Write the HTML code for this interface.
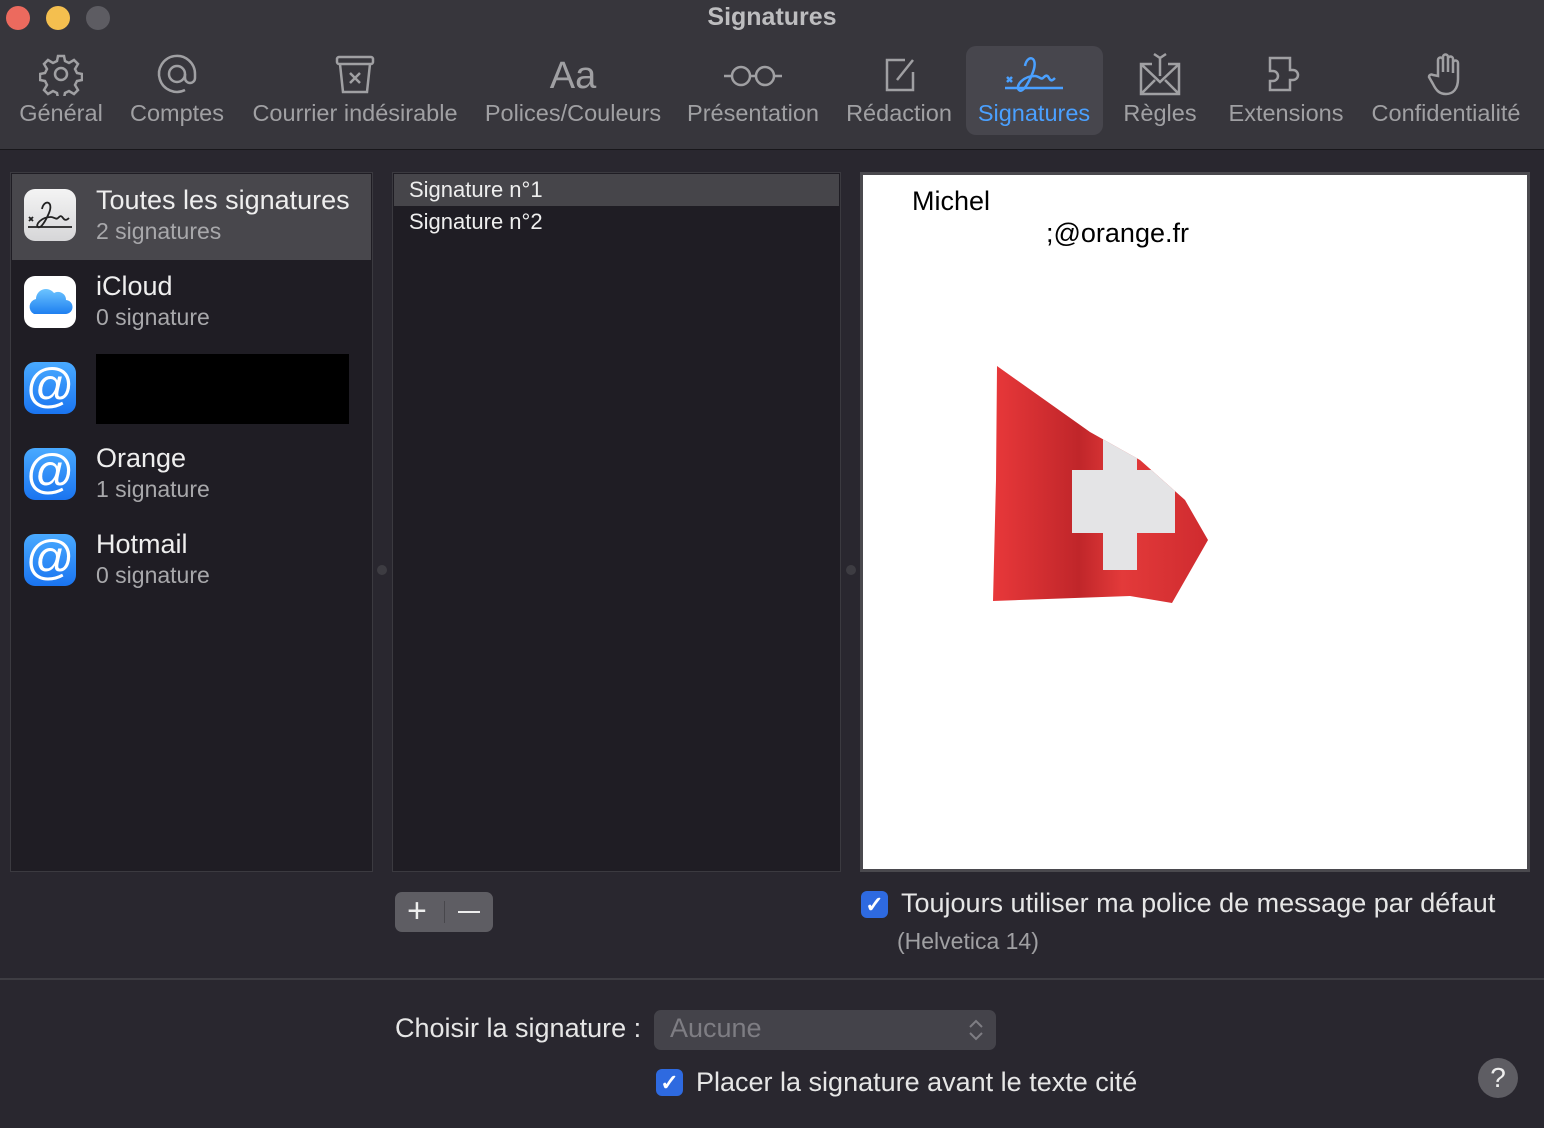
<!DOCTYPE html>
<html><head><meta charset="utf-8"><style>
*{margin:0;padding:0;box-sizing:border-box}
body{width:1544px;height:1128px;background:#29272f;font-family:"Liberation Sans",sans-serif;position:relative;overflow:hidden;color:#e6e6e6}
.tb{position:absolute;left:0;top:0;width:1544px;height:150px;background:#37363c;border-bottom:1px solid #18171b}
.dot{position:absolute;top:6px;width:24px;height:24px;border-radius:50%}
.title{position:absolute;top:3px;left:0;width:1544px;text-align:center;font-weight:bold;font-size:25px;color:#bdbdbf}
.it{position:absolute;top:52px;text-align:center;color:#a0a0a3;font-size:23.5px}
.it svg{display:block;margin:0 auto 4px}
.it span{display:block;white-space:nowrap;margin-left:-20px;margin-right:-20px}
.sel{position:absolute;left:966px;top:46px;width:137px;height:89px;background:#47464d;border-radius:10px}
.abs{position:absolute}
.list{background:#1f1d24;border:1px solid #3b3a40}
.row .n{font-size:27px;color:#eee}
.row .s{font-size:23px;color:#a8a8ab}
.ic{position:absolute;left:24px;width:52px;height:52px;border-radius:11px}
.at{background:linear-gradient(#49aaff,#1a74f0);color:#fff;font-size:48px;line-height:50px;text-align:center}
.cb{position:absolute;width:27px;height:27px;border-radius:6px;background:#2e6ae0;color:#fff;text-align:center;font-size:22px;line-height:27px;font-weight:bold}
</style></head><body>
<div class="tb">
<div class="dot" style="left:6px;background:#ec6a5e"></div>
<div class="dot" style="left:46px;background:#f4bf4f"></div>
<div class="dot" style="left:86px;background:#5d5c62"></div>
<div class="title">Signatures</div>
<div class="sel"></div>
<div class="it" style="left:14px;width:94px"><svg width="44" height="44" viewBox="0 0 44 44" fill="none" stroke="#a0a0a3" stroke-width="2.5"><circle cx="22" cy="22" r="6"/><path d="M19 4h6l1 5 4 2 5-3 4 4-3 5 2 4 5 1v6l-5 1-2 4 3 5-4 4-5-3-4 2-1 5h-6l-1-5-4-2-5 3-4-4 3-5-2-4-5-1v-6l5-1 2-4-3-5 4-4 5 3 4-2z"/></svg><span>Général</span></div>
<div class="it" style="left:128px;width:98px"><svg width="44" height="44" viewBox="0 0 44 44" fill="none" stroke="#a0a0a3" stroke-width="2.5"><circle cx="22" cy="22" r="8"/><path d="M30 22v4a5 5 0 0 0 10 0v-4A18 18 0 1 0 30 38"/></svg><span>Comptes</span></div>
<div class="it" style="left:250px;width:210px"><svg width="46" height="44" viewBox="0 0 46 44" fill="none" stroke="#a0a0a3" stroke-width="2.5"><rect x="5" y="5" width="36" height="7" rx="2"/><path d="M8 12l3 28h24l3-28M18 21l10 10M28 21l-10 10"/></svg><span>Courrier indésirable</span></div>
<div class="it" style="left:484px;width:178px"><div style="font-size:38px;height:44px;line-height:48px;margin-bottom:4px">Aa</div><span>Polices/Couleurs</span></div>
<div class="it" style="left:686px;width:134px"><svg width="62" height="44" viewBox="0 0 62 44" fill="none" stroke="#a0a0a3" stroke-width="2.5"><circle cx="19" cy="24" r="9"/><circle cx="43" cy="24" r="9"/><path d="M28 24h6M2 24h8M52 24h8"/></svg><span>Présentation</span></div>
<div class="it" style="left:844px;width:110px"><svg width="44" height="44" viewBox="0 0 44 44" fill="none" stroke="#a0a0a3" stroke-width="2.5"><path d="M28 8H10v30h26V20"/><path d="M20 28l16-20"/></svg><span>Rédaction</span></div>
<div class="it" style="left:972px;width:124px;color:#4aa0ff"><svg width="62" height="44" viewBox="0 0 62 44" fill="none" stroke="#4aa0ff" stroke-width="2.5"><path d="M4 25l5 5M9 25l-5 5M2 36h58"/><path d="M22 14c2-12 14-10 8 6c-3 8-10 22-14 18s4-14 16-14c4 0 6 4 8 2s4-4 6 0 4 2 6 0"/></svg><span>Signatures</span></div>
<div class="it" style="left:1120px;width:80px"><svg width="50" height="44" viewBox="0 0 50 44" fill="none" stroke="#a0a0a3" stroke-width="2.5"><path d="M17 12H6v30h38V12H33M6 12l19 18 19-18M6 42l14-14M44 42L30 28M25 24V6l-6-4M25 6l6-4"/></svg><span>Règles</span></div>
<div class="it" style="left:1226px;width:120px"><svg width="50" height="44" viewBox="0 0 50 44" fill="none" stroke="#a0a0a3" stroke-width="2.5"><path d="M9 6h20v12h3a5 5 0 0 1 0 10h-3v10H9V29h3a5 5 0 0 0 0-10H9z"/></svg><span>Extensions</span></div>
<div class="it" style="left:1366px;width:160px"><svg width="44" height="44" viewBox="0 0 44 44" fill="none" stroke="#a0a0a3" stroke-width="2.5"><path d="M14 24V8a2.5 2.5 0 0 1 5 0v12V5a2.5 2.5 0 0 1 5 0v15V7a2.5 2.5 0 0 1 5 0v14V11a2.5 2.5 0 0 1 5 0v16c0 10-5 15-12 15s-10-4-13-10l-4-7a2.5 2.5 0 0 1 4-2z"/></svg><span>Confidentialité</span></div>
</div>

<div class="abs list" style="left:10px;top:172px;width:363px;height:700px"></div>
<div class="abs" style="left:12px;top:174px;width:359px;height:86px;background:#48474c"></div>
<div class="ic" style="top:189px;background:linear-gradient(#f4f4f4,#d6d6d8)"><svg width="52" height="52" viewBox="0 0 52 52" fill="none" stroke="#222" stroke-width="1.8"><path d="M5 28l4 4M9 28l-4 4M4 38h44"/><path d="M18 20c2-10 12-8 7 4c-3 7-8 16-11 14s3-10 13-10c3 0 5 3 7 1s3-3 5 0 4 2 6 0"/></svg></div>
<div class="abs row" style="left:96px;top:185px"><div class="n">Toutes les signatures</div><div class="s" style="margin-top:2px">2 signatures</div></div>
<div class="ic" style="top:276px;background:#fff"><svg width="52" height="52" viewBox="0 0 52 52"><defs><linearGradient id="g" x1="0" y1="0" x2="0" y2="1"><stop offset="0" stop-color="#6cc4ff"/><stop offset="1" stop-color="#1e7ff0"/></linearGradient></defs><path d="M10 38a8 8 0 0 1 2-15a10 10 0 0 1 18-6a8 8 0 0 1 12 7a7 7 0 0 1-1 14z" fill="url(#g)"/></svg></div>
<div class="abs row" style="left:96px;top:271px"><div class="n">iCloud</div><div class="s" style="margin-top:2px">0 signature</div></div>
<div class="ic at" style="top:362px">@</div>
<div class="abs" style="left:96px;top:354px;width:253px;height:70px;background:#000"></div>
<div class="ic at" style="top:448px">@</div>
<div class="abs row" style="left:96px;top:443px"><div class="n">Orange</div><div class="s" style="margin-top:2px">1 signature</div></div>
<div class="ic at" style="top:534px">@</div>
<div class="abs row" style="left:96px;top:529px"><div class="n">Hotmail</div><div class="s" style="margin-top:2px">0 signature</div></div>

<div class="abs" style="left:377px;top:565px;width:10px;height:10px;border-radius:50%;background:#3d3c42"></div>
<div class="abs list" style="left:392px;top:172px;width:449px;height:700px"></div>
<div class="abs" style="left:394px;top:174px;width:445px;height:32px;background:#46454a"></div>
<div class="abs" style="left:409px;top:177px;font-size:22px;color:#eee">Signature n°1</div>
<div class="abs" style="left:409px;top:209px;font-size:22px;color:#eee">Signature n°2</div>
<div class="abs" style="left:846px;top:565px;width:10px;height:10px;border-radius:50%;background:#3d3c42"></div>

<div class="abs" style="left:860px;top:172px;width:670px;height:700px;background:#fff;border:3px solid #4a494e"></div>
<div class="abs" style="left:912px;top:186px;font-size:27px;color:#000">Michel</div>
<div class="abs" style="left:1046px;top:218px;font-size:27px;color:#000">;@orange.fr</div>
<svg class="abs" style="left:985px;top:360px" width="230" height="250" viewBox="985 360 230 250">
<defs><linearGradient id="r" x1="0" x2="1"><stop offset="0" stop-color="#e8383a"/><stop offset=".4" stop-color="#c0262a"/><stop offset=".6" stop-color="#e33a3a"/><stop offset="1" stop-color="#cf2b2f"/></linearGradient>
<clipPath id="c"><path d="M997 366L1090 432L1140 460L1185 500L1208 540L1172 603L1130 596L993 601L996 480Z"/></clipPath></defs>
<path d="M997 366L1090 432L1140 460L1185 500L1208 540L1172 603L1130 596L993 601L996 480Z" fill="url(#r)"/>
<path clip-path="url(#c)" d="M1072 470H1103V430H1137V470H1175V533H1137V570H1103V533H1072Z" fill="#e4e4e6"/>
</svg>

<div class="abs" style="left:395px;top:892px;width:98px;height:40px;border-radius:7px;background:#5e5d63"></div>
<div class="abs" style="left:444px;top:901px;width:1px;height:22px;background:#48474c"></div>
<div class="abs" style="left:407px;top:892px;font-size:34px;color:#eee">+</div>
<div class="abs" style="left:458px;top:911px;width:22px;height:2px;background:#eee"></div>

<div class="cb" style="left:861px;top:891px">✓</div>
<div class="abs" style="left:901px;top:888px;font-size:27px;color:#e6e6e6">Toujours utiliser ma police de message par défaut</div>
<div class="abs" style="left:897px;top:928px;font-size:23px;color:#a0a0a3">(Helvetica 14)</div>
<div class="abs" style="left:0;top:978px;width:1544px;height:2px;background:#3e3d43"></div>
<div class="abs" style="left:395px;top:1013px;font-size:27px;color:#e6e6e6">Choisir la signature :</div>
<div class="abs" style="left:654px;top:1010px;width:342px;height:40px;border-radius:7px;background:#44434a"></div>
<div class="abs" style="left:670px;top:1013px;font-size:27px;color:#7e7d83">Aucune</div>
<svg class="abs" style="left:966px;top:1017px" width="20" height="26" viewBox="0 0 20 26" fill="none" stroke="#7e7d83" stroke-width="2"><path d="M4 10l6-6 6 6M4 16l6 6 6-6"/></svg>
<div class="cb" style="left:656px;top:1069px">✓</div>
<div class="abs" style="left:696px;top:1067px;font-size:27px;color:#e6e6e6">Placer la signature avant le texte cité</div>
<div class="abs" style="left:1478px;top:1058px;width:40px;height:40px;border-radius:50%;background:#5e5d63;color:#eee;font-size:28px;text-align:center;line-height:40px">?</div>
</body></html>
